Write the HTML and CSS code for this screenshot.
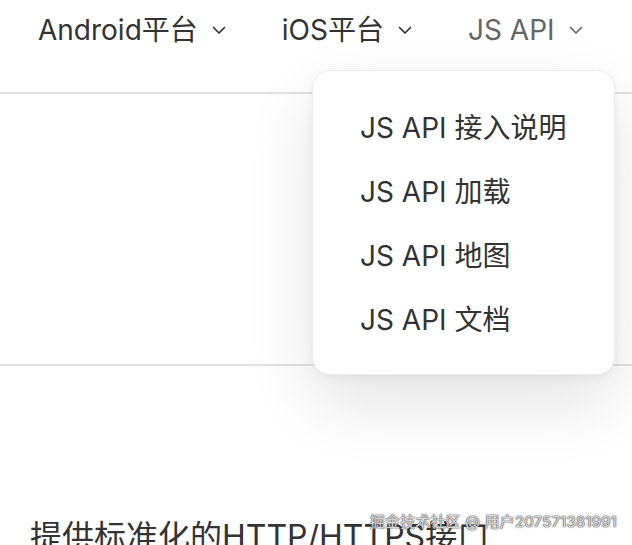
FILE: index.html
```html
<!DOCTYPE html>
<html lang="zh-CN">
<head>
<meta charset="utf-8">
<link rel="stylesheet" href="styles.css">
</head>
<body>
<div class="page">
  <header class="header">
    <nav class="nav">
      <div class="nav-item">Android平台<svg class="chev" viewBox="0 0 16 10"><path d="M2.5 2.5 L8 8 L13.5 2.5"/></svg></div>
      <div class="nav-item">iOS平台<svg class="chev" viewBox="0 0 16 10"><path d="M2.5 2.5 L8 8 L13.5 2.5"/></svg></div>
      <div class="nav-item active">JS API<svg class="chev" viewBox="0 0 16 10"><path d="M2.5 2.5 L8 8 L13.5 2.5"/></svg></div>
    </nav>
  </header>
  <section class="band"></section>
  <section class="content">
    <h2 class="title">提供标准化的HTTP/HTTPS接口</h2>
  </section>
  <div class="dropdown">
    <div class="dd-item">JS API 接入说明</div>
    <div class="dd-item">JS API 加载</div>
    <div class="dd-item">JS API 地图</div>
    <div class="dd-item">JS API 文档</div>
  </div>
  <div class="watermark">掘金技术社区 @ 用户207571381991</div>
</div>
</body>
</html>
```
FILE: styles.css
```css
html, body {
  margin: 0;
  padding: 0;
  background: #fff;
}
body {
  font-family: Inter, "Noto Sans CJK SC", sans-serif;
  color: #333;
  width: 632px;
  height: 545px;
  overflow: hidden;
}
.page {
  position: relative;
  width: 632px;
  height: 545px;
  overflow: hidden;
}
.header {
  height: 92px;
  border-bottom: 2px solid #e3e3e3;
}
.nav {
  display: flex;
  padding-left: 38px;
  padding-top: 10px;
  gap: 55px;
}
.nav-item {
  display: flex;
  align-items: center;
  font-size: 28px;
  line-height: 40px;
  color: #333;
  gap: 13px;
}
.nav-item.active {
  color: #666;
}
.chev {
  width: 16px;
  height: 10px;
  fill: none;
  stroke: currentColor;
  stroke-width: 1.7;
  stroke-linecap: round;
  stroke-linejoin: round;
}
.band {
  height: 270px;
  border-bottom: 2px solid #e3e3e3;
}
.content {
  padding: 0 0 0 30px;
}
.title {
  margin: 150px 0 0;
  font-size: 32px;
  font-weight: 400;
  color: #333;
  line-height: 42px;
  white-space: nowrap;
}
.dropdown {
  position: absolute;
  left: 312px;
  top: 70px;
  width: 303px;
  height: 305px;
  box-sizing: border-box;
  background: #fff;
  border: 1px solid #ececec;
  border-radius: 18px;
  box-shadow: 0 28px 70px rgba(0, 0, 0, 0.11), 0 3px 8px rgba(0, 0, 0, 0.05);
  padding: 25px 0 0 47px;
}
.dd-item {
  font-size: 28px;
  line-height: 64px;
  height: 64px;
  color: #333;
  white-space: nowrap;
}
.watermark {
  position: absolute;
  right: 15px;
  bottom: 14px;
  font-size: 15px;
  letter-spacing: 0.2px;
  line-height: 18px;
  color: rgba(235, 235, 235, 0.9);
  text-shadow: 0 0 1px #555, 0 0 1px #555, 0 0 2px #777;
  white-space: nowrap;
}
```
